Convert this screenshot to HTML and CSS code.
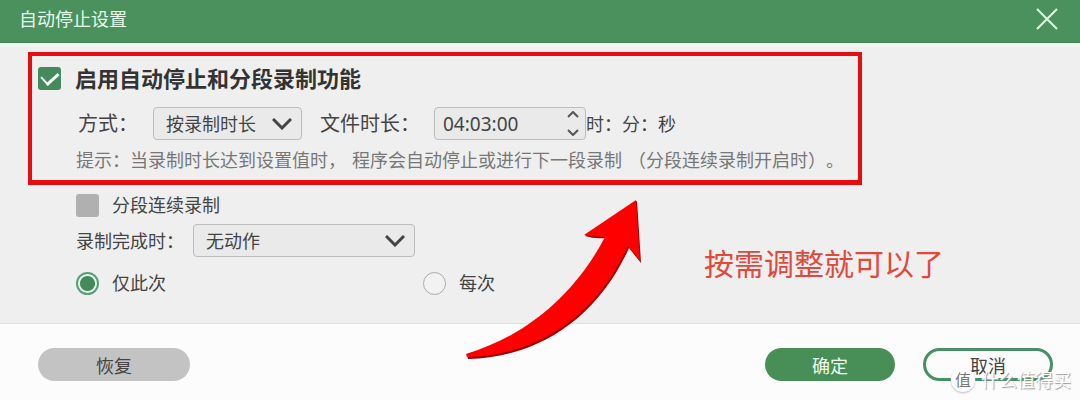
FILE: index.html
```html
<!DOCTYPE html>
<html lang="zh-CN">

<head>
    <meta charset="UTF-8">
    <meta name="viewport" content="width=device-width, initial-scale=1.0">
    <title>自动停止设置</title>
    <link rel="stylesheet" href="styles.css">
</head>

<body>

    <!-- Title Bar -->
    <header class="titlebar">
        <h1>自动停止设置</h1>
        <button class="close" type="button" aria-label="关闭">
            <svg width="22" height="22" viewBox="0 0 22 22"><path d="M1 1L21 21M21 1L1 21" /></svg>
        </button>
    </header>

    <!-- Settings Section -->
    <main class="settings">
        <section class="frame">
            <div class="row heading">
                <input type="checkbox" id="enable" checked>
                <label for="enable">启用自动停止和分段录制功能</label>
            </div>
            <div class="row mode">
                <label for="mode">方式：</label>
                <div class="select-wrap mode-select">
                    <select id="mode">
                        <option>按录制时长</option>
                    </select>
                    <svg class="chevron" width="20" height="12" viewBox="0 0 20 12"><path d="M1 1L10 10L19 1" /></svg>
                </div>
                <label class="length-label" for="length">文件时长：</label>
                <div class="time-wrap">
                    <input type="text" id="length" value="04:03:00">
                    <div class="spin">
                        <button type="button" aria-label="增加"><svg width="12" height="7" viewBox="0 0 12 7"><path d="M1 6L6 1L11 6" /></svg></button>
                        <button type="button" aria-label="减少"><svg width="12" height="7" viewBox="0 0 12 7"><path d="M1 1L6 6L11 1" /></svg></button>
                    </div>
                </div>
                <span class="unit">时：分：秒</span>
            </div>
            <p class="hint">
                <span>提示：当录制时长达到设置值时，</span>
                <span>程序会自动停止或进行下一段录制</span>
                <span>（分段连续录制开启时）。</span>
            </p>
        </section>

        <div class="options">
            <div class="row">
                <input type="checkbox" id="segment" disabled>
                <label for="segment">分段连续录制</label>
            </div>
            <div class="row finish">
                <label for="finish">录制完成时：</label>
                <div class="select-wrap finish-select">
                    <select id="finish">
                        <option>无动作</option>
                    </select>
                    <svg class="chevron" width="20" height="12" viewBox="0 0 20 12"><path d="M1 1L10 10L19 1" /></svg>
                </div>
            </div>
            <div class="row radios">
                <div class="radio">
                    <input type="radio" name="repeat" id="once" checked>
                    <label for="once">仅此次</label>
                </div>
                <div class="radio">
                    <input type="radio" name="repeat" id="always">
                    <label for="always">每次</label>
                </div>
            </div>
        </div>
    </main>

    <!-- Footer Section -->
    <footer class="actions">
        <button class="btn restore" type="button">恢复</button>
        <button class="btn ok" type="button">确定</button>
        <button class="btn cancel" type="button">取消</button>
    </footer>

    <!-- Notes drawn over the dialog -->
    <svg class="arrow" width="184" height="168" viewBox="460 195 184 168">
        <path class="arrow-edge" d="M637 201L585 236Q595 239 605 238C583 282 540 334 467 355L468 359C545 357 600 312 629 248L641 263Z" />
        <path class="arrow-fill" d="M636 200L584 235Q594 237 605 237C582 281 539 332 466 354L467 357C544 355 599 310 628 246L640 261Z" />
    </svg>
    <p class="note">按需调整就可以了</p>
    <div class="watermark"><span class="badge">值</span><span>什么值得买</span></div>

</body>

</html>
```
FILE: styles.css
```css
* {
    box-sizing: border-box;
}

body {
    font-family: "Noto Sans", "Noto Sans CJK SC", sans-serif;
    font-size: 18px;
    line-height: 24px;
    color: #444;
    background-color: #fcfcfc;
    margin: 0;
    min-height: 100vh;
    position: relative;
    display: flex;
    flex-direction: column;
}

button,
select,
input {
    font-family: inherit;
    font-size: 18px;
    color: inherit;
    margin: 0;
}

svg {
    display: block;
    fill: none;
}

/* Title bar */
.titlebar {
    display: flex;
    justify-content: space-between;
    align-items: center;
    height: 43px;
    padding: 0 22px 4px 19px;
    background-color: #4b915e;
    border-bottom: 1px solid #477f58;
}

.titlebar h1 {
    margin: 0;
    font-size: 18px;
    font-weight: normal;
    color: #e6fbe9;
}

.close {
    padding: 0;
    border: none;
    background: none;
    cursor: pointer;
}

.close path {
    stroke: #dcf8e0;
    stroke-width: 2;
}

/* Settings */
.settings {
    padding: 5px 28px 28px;
    background-color: #efefef;
    border-top: 4px solid #eff6f1;
    border-bottom: 1px solid #e0e0e0;
}

.frame {
    max-width: 834px;
    padding: 6px 6px 8px;
    border: 4px solid #e60c10;
    border-bottom-width: 5px;
}

.row {
    display: flex;
    align-items: center;
}

.heading {
    gap: 14px;
    height: 32px;
}

.heading label {
    font-size: 22px;
    font-weight: bold;
    color: #333;
}

input[type="checkbox"] {
    appearance: none;
    width: 23px;
    height: 23px;
    border-radius: 3px;
    background-color: #448a5d;
    display: grid;
    place-items: center;
}

input[type="checkbox"]:checked::before {
    content: "";
    width: 14px;
    height: 8px;
    margin-bottom: 4px;
    border-left: 2px solid #f2fff4;
    border-bottom: 3px solid #f2fff4;
    transform: rotate(-42deg);
}

input[type="checkbox"]:disabled {
    background-color: #b0b0b0;
}

.mode {
    margin: 13px 0 8px;
    padding-left: 40px;
    font-size: 20px;
}

.select-wrap,
.time-wrap {
    position: relative;
}

select,
.time-wrap input {
    appearance: none;
    width: 100%;
    height: 33px;
    padding: 0 12px;
    border: 1px solid #bdbdbd;
    border-radius: 4px;
    background-color: #eaeaea;
    display: block;
}

.time-wrap input {
    padding: 0 8px;
    font-size: 19px;
}

.mode-select {
    width: 149px;
    margin-left: 15px;
}

.chevron {
    position: absolute;
    right: 10px;
    top: 11px;
    pointer-events: none;
}

.chevron path {
    stroke: #444;
    stroke-width: 3;
}

.length-label {
    margin-left: 18px;
}

.time-wrap {
    width: 152px;
    margin-left: 14px;
}

.spin {
    position: absolute;
    right: 7px;
    top: 4px;
    bottom: 4px;
    display: flex;
    flex-direction: column;
    justify-content: space-between;
}

.spin button {
    padding: 0;
    border: none;
    background: none;
}

.spin path {
    stroke: #555;
    stroke-width: 2;
}

.unit {
    font-size: 18px;
}

.hint {
    display: flex;
    gap: 6px;
    margin: 0;
    padding-left: 38px;
    color: #777;
    white-space: nowrap;
    text-spacing-trim: space-all;
}

.options {
    padding: 8px 0 0 48px;
}

.options .row {
    gap: 13px;
}

.finish {
    margin: 7px 0 14px;
}

.options .finish {
    gap: 9px;
}

.finish-select {
    width: 222px;
}

.radio {
    display: flex;
    align-items: center;
    gap: 13px;
    width: 334px;
}

input[type="radio"] {
    appearance: none;
    width: 23px;
    height: 23px;
    border: 1px solid #aaa;
    border-radius: 50%;
    background-color: #f2f2f2;
}

input[type="radio"]:checked {
    border: 2px solid #5c9c76;
    background: radial-gradient(circle, #448a5d 7px, #e6f8eb 8px);
}

/* Buttons */
.actions {
    display: flex;
    align-items: center;
    gap: 28px;
    padding: 24px 27px 18px 38px;
}

.btn {
    width: 130px;
    height: 33px;
    padding: 0;
    border: none;
    border-radius: 17px;
    cursor: pointer;
}

.restore {
    width: 152px;
    margin-right: auto;
    background-color: #c3c3c3;
}

.ok {
    background-color: #478f57;
    color: #effff1;
}

.cancel {
    border: 3px solid #478f65;
    background-color: #fcfcfc;
}

/* Overlays */
.arrow {
    position: absolute;
    left: 460px;
    top: 195px;
    pointer-events: none;
}

.arrow-edge {
    fill: #900;
}

.arrow-fill {
    fill: #f00;
}

.note {
    position: absolute;
    left: 704px;
    top: 244px;
    margin: 0;
    font-size: 30px;
    line-height: 40px;
    color: #e2483b;
}

.watermark {
    position: absolute;
    right: 9px;
    bottom: 8px;
    display: flex;
    align-items: center;
    gap: 6px;
    color: #fff;
    text-shadow: 1px 1px 1px #999;
    pointer-events: none;
}

.badge {
    width: 24px;
    height: 24px;
    border-radius: 50%;
    background-color: #fff;
    box-shadow: 0 1px 2px #bbb;
    color: #777;
    text-align: center;
    text-shadow: none;
    font-size: 16px;
}
```
